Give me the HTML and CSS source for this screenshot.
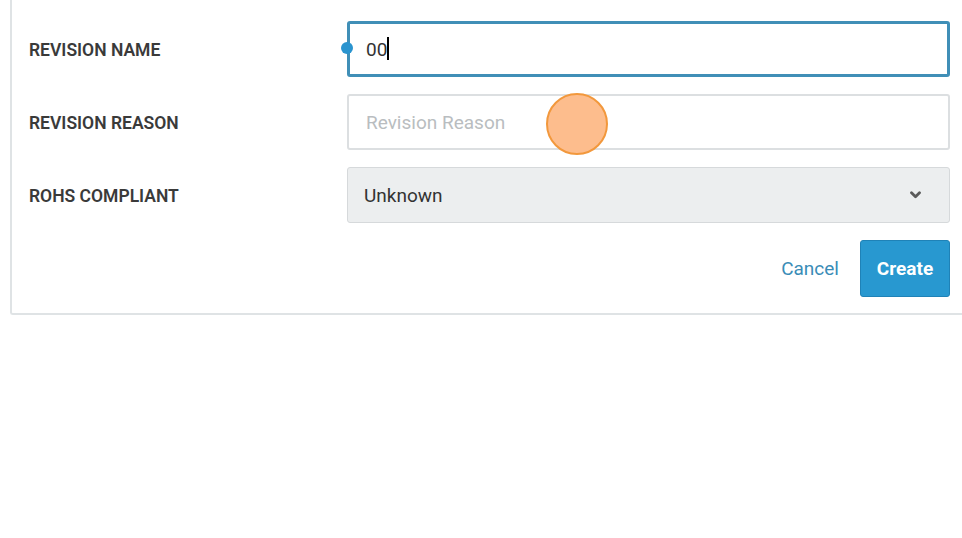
FILE: index.html
```html
<!DOCTYPE html>
<html lang="en">
<head>
<meta charset="utf-8">
<title>Create Revision</title>
<link rel="stylesheet" href="styles.css">
</head>
<body>
<div class="card">
  <form class="form">
    <label class="label" for="rev-name">REVISION NAME</label>
    <div class="field">
      <input id="rev-name" class="input input-focus" type="text" value="00">
      <span class="dot"></span>
      <span class="caret"></span>
    </div>

    <label class="label" for="rev-reason">REVISION REASON</label>
    <div class="field">
      <input id="rev-reason" class="input" type="text" placeholder="Revision Reason">
      <span class="click"></span>
    </div>

    <label class="label" for="rohs">ROHS COMPLIANT</label>
    <div class="field">
      <div class="select" id="rohs">
        <span>Unknown</span>
        <svg class="chev" width="11" height="8" viewBox="0 0 11 8"><path d="M1.5 1.8 L5.5 5.8 L9.5 1.8" fill="none" stroke="#5a5a5a" stroke-width="2.8" stroke-linecap="round" stroke-linejoin="round"/></svg>
      </div>
    </div>

    <div class="actions">
      <button type="button" class="btn-cancel">Cancel</button>
      <button type="button" class="btn-create">Create</button>
    </div>
  </form>
</div>
</body>
</html>
```

FILE: styles.css
```css
html, body {
  margin: 0;
  padding: 0;
  background: #ffffff;
}
body {
  font-family: Roboto, "Liberation Sans", Arial, sans-serif;
  color: #333;
  width: 962px;
  height: 538px;
  overflow: hidden;
}
.card {
  margin-left: 10px;
  border-left: 2px solid #dfe3e5;
  border-bottom: 2px solid #dfe3e5;
  border-bottom-left-radius: 3px;
  padding: 21px 12px 16px 17px;
}
.form {
  display: grid;
  grid-template-columns: 318px 1fr;
  row-gap: 17px;
  align-items: center;
}
.label {
  font-size: 17.5px;
  font-weight: 600;
  color: #3a3a3a;
  letter-spacing: 0;
  padding-top: 2px;
}
.field {
  position: relative;
  height: 56px;
}
.input {
  box-sizing: border-box;
  width: 100%;
  height: 56px;
  border: 2px solid #dcdfe1;
  border-radius: 3px;
  padding: 0 0 0 17px;
  font-family: Roboto, "Liberation Sans", Arial, sans-serif;
  font-size: 19px;
  color: #333;
  background: #fff;
  outline: none;
}
.input::placeholder {
  color: #b9bdc0;
}
.input-focus {
  border: 3px solid #408fb7;
  padding-left: 16px;
}
.dot {
  position: absolute;
  left: -6px;
  top: 21px;
  width: 12px;
  height: 12px;
  border-radius: 50%;
  background: #2a94cf;
}
.caret {
  position: absolute;
  left: 40px;
  top: 16px;
  width: 2px;
  height: 23px;
  background: #000;
}
.click {
  position: absolute;
  left: 199px;
  top: -1px;
  width: 58px;
  height: 58px;
  border-radius: 50%;
  background: #fdbd8d;
  border: 2px solid #f2983c;
}
.select {
  box-sizing: border-box;
  height: 56px;
  border: 1px solid #d6d9db;
  border-radius: 3px;
  background: #eceeef;
  display: flex;
  align-items: center;
  justify-content: space-between;
  padding: 0 28px 0 16px;
  font-size: 19px;
  color: #333;
}
.chev {
  display: block;
}
.actions {
  grid-column: 2;
  display: flex;
  justify-content: flex-end;
  align-items: center;
  gap: 21px;
}
.btn-cancel {
  background: none;
  border: 0;
  padding: 0;
  font-family: Roboto, "Liberation Sans", Arial, sans-serif;
  font-size: 19px;
  color: #3a8cb7;
  cursor: pointer;
}
.btn-create {
  box-sizing: border-box;
  width: 90px;
  height: 57px;
  background: #2898d0;
  border: 1px solid #1f82b7;
  border-radius: 3px;
  color: #fff;
  font-family: Roboto, "Liberation Sans", Arial, sans-serif;
  font-size: 19px;
  font-weight: 700;
  padding: 0;
  cursor: pointer;
}
```
